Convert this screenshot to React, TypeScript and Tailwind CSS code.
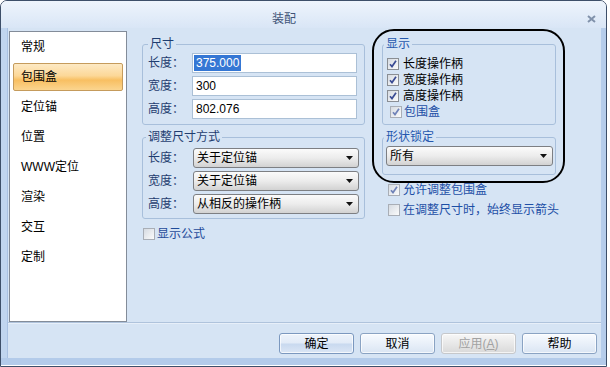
import React from "react";

const FONT = "font-['Liberation_Sans','Noto_Sans_CJK_SC',sans-serif]";

const NAV = ["常规", "包围盒", "定位锚", "位置", "WWW定位", "渲染", "交互", "定制"];

function CheckBox({ checked, faded }: { checked?: boolean; faded?: boolean }) {
  return (
    <span
      className={`flex h-[12px] w-[12px] shrink-0 items-center justify-center border bg-linear-to-br from-[#d6dbe2] to-[#fbfbfb] ${
        faded ? "border-[#a9aeb6]" : "border-[#8a8e94]"
      }`}
    >
      {checked && (
        <svg width="8" height="8" viewBox="0 0 8 8">
          <path d="M1 4.2 L3 6.6 L7 0.8" fill="none" stroke={faded ? "#7083b8" : "#3b4c94"} strokeWidth="1.7" />
        </svg>
      )}
    </span>
  );
}

function Select({ value, width }: { value: string; width: string }) {
  return (
    <div
      className={`flex h-[20px] items-center rounded-[3px] border border-[#7d7f83] bg-linear-to-b from-[#fbfbfb] via-[#ececec] to-[#d2d2d2] pl-[3px] pr-[5px] text-black ${width}`}
    >
      <span className="flex-1 leading-[14px]">{value}</span>
      <svg width="7" height="4" viewBox="0 0 7 4">
        <path d="M0 0 H7 L3.5 4 Z" fill="#111" />
      </svg>
    </div>
  );
}

function Btn({ children, primary, disabled }: { children: React.ReactNode; primary?: boolean; disabled?: boolean }) {
  const look = disabled
    ? "border-[#c6c8cb] bg-linear-to-b from-[#f7f7f7] to-[#d9d9d9] text-[#a2a2a2]"
    : primary
    ? "border-[#7b98bf] bg-[linear-gradient(to_bottom,#edf3fb_0%,#e2ebf7_48%,#c8d9ef_52%,#dbe6f5_100%)] text-black"
    : "border-[#8aa3c3] bg-linear-to-b from-[#f8fbff] to-[#dae5f3] text-black";
  return (
    <div className={`flex h-[21px] w-[75px] items-center justify-center rounded-[3px] border shadow-[inset_0_0_0_1px_rgba(255,255,255,0.7)] ${look}`}>
      {children}
    </div>
  );
}

export default function App() {
  return (
    <div className={`${FONT} text-[12px] bg-white w-[610px] h-[367px]`}>
      <div className="flex h-[367px] w-[607px] flex-col overflow-hidden rounded-t-[7px] border border-[#3d4f69]">
        {/* Title bar */}
        <div className="flex h-[27px] items-start bg-linear-to-b from-[#eef4fc] to-[#d9e6f6]">
          <div className="flex-1 pt-[11px] pr-[20px] text-center leading-[14px] text-[#3f5478]">装配</div>
          <svg className="mt-[14px] mr-[10px]" width="9" height="8" viewBox="0 0 9 8">
            <path d="M1 1 L8 7 M8 1 L1 7" stroke="#8192ab" strokeWidth="2" />
          </svg>
        </div>

        <div className="flex">
          <div className="h-[330px] w-[7px] border-r border-[#a9c1e2] bg-[#c0d5ef]" />

          {/* Content */}
          <div className="relative flex h-[330px] w-[593px] flex-col bg-[#d6e4f4]">
            <div className="flex h-[294px]">
              {/* Left list */}
              <div className="mt-[3px] ml-[1px] flex h-[291px] w-[118px] flex-col gap-[2px] border border-[#838c99] bg-white px-[3px] pt-[1px]">
                {NAV.map((n, i) => (
                  <div
                    key={n}
                    className={`flex h-[28px] items-center text-black ${
                      i === 1
                        ? "rounded-[2px] border border-[#c59b5c] bg-[linear-gradient(to_bottom,#fde9c4_0%,#fcd898_45%,#f8bf62_62%,#fbd58f_100%)] pl-[7px]"
                        : "pl-[8px]"
                    }`}
                  >
                    {n}
                  </div>
                ))}
              </div>

              {/* Column 1 */}
              <div className="mt-[9px] ml-[15px] flex w-[223px] flex-col">
                <fieldset className="rounded-[3px] border border-[#a8bfdb] pl-[5px] pt-[2px] pb-[5px]">
                  <legend className="px-[2px] leading-[14px] text-[#1f3d70]">尺寸</legend>
                  <div className="flex flex-col gap-[3px]">
                    <div className="flex items-center">
                      <span className="w-[44px] text-[#1f3d70]">长度：</span>
                      <div className="flex h-[20px] w-[165px] items-center border border-[#abc0d6] bg-white pl-[1px]">
                        <span className="bg-[#3577d4] px-[2px] leading-[16px] text-white">375.000</span>
                      </div>
                    </div>
                    <div className="flex items-center">
                      <span className="w-[44px] text-[#1f3d70]">宽度：</span>
                      <div className="flex h-[20px] w-[165px] items-center border border-[#abc0d6] bg-white pl-[3px] text-black">300</div>
                    </div>
                    <div className="flex items-center">
                      <span className="w-[44px] text-[#1f3d70]">高度：</span>
                      <div className="flex h-[20px] w-[165px] items-center border border-[#abc0d6] bg-white pl-[3px] text-black">802.076</div>
                    </div>
                  </div>
                </fieldset>

                <fieldset className="mt-[5px] rounded-[3px] border border-[#a8bfdb] pl-[5px] pt-[4px] pb-[4px]">
                  <legend className="-ml-[2px] px-[2px] leading-[14px] text-[#1f3d70]">调整尺寸方式</legend>
                  <div className="flex flex-col gap-[3px]">
                    <div className="flex items-center">
                      <span className="w-[45px] text-[#1f3d70]">长度：</span>
                      <Select value="关于定位锚" width="w-[166px]" />
                    </div>
                    <div className="flex items-center">
                      <span className="w-[45px] text-[#1f3d70]">宽度：</span>
                      <Select value="关于定位锚" width="w-[166px]" />
                    </div>
                    <div className="flex items-center">
                      <span className="w-[45px] text-[#1f3d70]">高度：</span>
                      <Select value="从相反的操作柄" width="w-[166px]" />
                    </div>
                  </div>
                </fieldset>

                <div className="mt-[8px] ml-[1px] flex h-[14px] items-center gap-[2px] text-[#1f4b9a]">
                  <CheckBox faded />
                  <span>显示公式</span>
                </div>
              </div>

              {/* Column 2 */}
              <div className="mt-[9px] ml-[17px] flex w-[174px] flex-col">
                <fieldset className="rounded-[3px] border border-[#a8bfdb] pl-[4px] pt-[5px] pb-[4px]">
                  <legend className="-ml-[3px] px-[2px] leading-[14px] text-[#2558ae]">显示</legend>
                  {["长度操作柄", "宽度操作柄", "高度操作柄"].map((t) => (
                    <div key={t} className="flex h-[16px] items-center gap-[4px] text-black">
                      <CheckBox checked />
                      <span>{t}</span>
                    </div>
                  ))}
                  <div className="ml-[3px] flex h-[16px] items-center gap-[2px] text-[#1d4fa6]">
                    <CheckBox checked faded />
                    <span>包围盒</span>
                  </div>
                </fieldset>

                <fieldset className="mt-[5px] rounded-[3px] border border-[#a8bfdb] pl-[3px] pt-[2px] pb-[8px]">
                  <legend className="-ml-[2px] px-[2px] leading-[14px] text-[#2558ae]">形状锁定</legend>
                  <Select value="所有" width="w-[167px]" />
                </fieldset>

                <div className="mt-[6px] ml-[6px] flex flex-col gap-[3px] whitespace-nowrap text-[#1d4fa6]">
                  <div className="flex h-[17px] items-center gap-[3px]">
                    <CheckBox checked faded />
                    <span>允许调整包围盒</span>
                  </div>
                  <div className="flex h-[17px] items-center gap-[3px]">
                    <CheckBox faded />
                    <span>在调整尺寸时，始终显示箭头</span>
                  </div>
                </div>
              </div>
            </div>

            {/* Separator */}
            <div className="h-[2px] border-t border-[#afc3dc] bg-[#e7eff9]" />

            {/* Buttons */}
            <div className="mt-[9px] flex justify-end gap-[6px] pr-[4px]">
              <Btn primary>确定</Btn>
              <Btn>取消</Btn>
              <Btn disabled>
                应用(<span className="underline">A</span>)
              </Btn>
              <Btn>帮助</Btn>
            </div>

            {/* Highlight annotation */}
            <div className="absolute left-[364px] top-[1px] h-[154px] w-[193px] rounded-[22px] border-2 border-black" />
          </div>

          <div className="h-[330px] w-[5px] bg-[#b6cdeb]" />
        </div>

        <div className="h-[7px] bg-[#b3cbea]" />
      </div>
    </div>
  );
}
